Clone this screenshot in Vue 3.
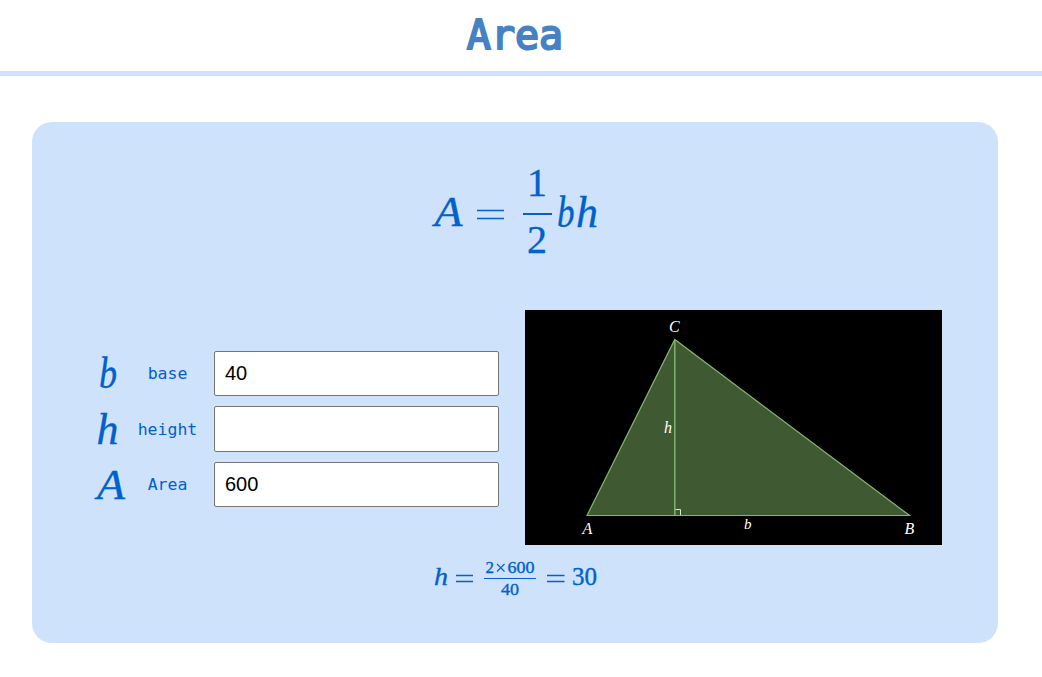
<script setup>
import { reactive } from 'vue'

const fields = reactive([
  { symbol: 'b', name: 'base', value: '40', x: 5, y: 36.5, width: 18, size: 43.5 },
  { symbol: 'h', name: 'height', value: '', x: 2.5, y: 36.5, width: 22, size: 43.5 },
  { symbol: 'A', name: 'Area', value: '600', x: 3, y: 36.5, width: 28, size: 43 },
])
</script>

<template>
  <div class="page">
    <header class="header">
      <h1 class="title">Area</h1>
    </header>
    <main class="card">
      <svg class="formula" width="170" height="96" viewBox="0 0 170 96" aria-label="A = 1/2 b h">
        <text class="italic" x="4.500" y="65.500" font-size="43" textLength="28" lengthAdjust="spacingAndGlyphs">A</text>
        <path d="M47 50.500H74M47 58.500H74" stroke-width="1.5" />
        <text x="97" y="36" font-size="40">1</text>
        <path d="M93 54H122" stroke-width="2" />
        <text x="97" y="93" font-size="40">2</text>
        <text class="italic" x="127" y="66.500" font-size="43.5" textLength="17.500" lengthAdjust="spacingAndGlyphs">b</text>
        <text class="italic" x="146" y="66.500" font-size="43.5" textLength="22" lengthAdjust="spacingAndGlyphs">h</text>
      </svg>

      <div class="content">
        <form class="fields" @submit.prevent>
          <label v-for="field in fields" :key="field.symbol" class="field">
            <svg class="symbol" width="36" height="45" viewBox="0 0 36 45">
              <text
                class="italic"
                :x="field.x"
                :y="field.y"
                :font-size="field.size"
                :textLength="field.width"
                lengthAdjust="spacingAndGlyphs"
              >{{ field.symbol }}</text>
            </svg>
            <span class="name">{{ field.name }}</span>
            <input v-model="field.value" class="input" type="text" />
          </label>
        </form>

        <svg class="diagram" width="417" height="235" viewBox="0 0 417 235">
          <path class="triangle" d="M62 205.500L149.800 29.500L384.500 205.500Z" />
          <path class="altitude" d="M149.800 30V205.500" />
          <path class="corner" d="M150.500 199.500H155.500V205" />
          <text x="144" y="22" font-size="16">C</text>
          <text x="139" y="123" font-size="16">h</text>
          <text x="57.500" y="224" font-size="16">A</text>
          <text x="219" y="219" font-size="15">b</text>
          <text x="379.500" y="223.500" font-size="16">B</text>
        </svg>
      </div>

      <svg class="result" width="170" height="44" viewBox="0 0 170 44" aria-label="h = (2 × 600) / 40 = 30">
        <text class="italic" x="4" y="30" font-size="26" textLength="14" lengthAdjust="spacingAndGlyphs">h</text>
        <path d="M26 20.500H43M26 26.500H43" stroke-width="1.300" />
        <text x="55.500" y="18" font-size="17">2</text>
        <path d="M67 9L74.500 16.500M74.500 9L67 16.500" stroke-width="1.100" />
        <text x="77.500" y="18" font-size="17" textLength="27" lengthAdjust="spacingAndGlyphs">600</text>
        <path d="M54 23.500H106" stroke-width="1.200" />
        <text x="71" y="40" font-size="17" textLength="18" lengthAdjust="spacingAndGlyphs">40</text>
        <path d="M117 20.500H134.500M117 26.500H134.500" stroke-width="1.300" />
        <text x="142" y="30" font-size="25">30</text>
      </svg>
    </main>
  </div>
</template>

<style>
body {
  background: #fff;
}
</style>

<style scoped>
.page {
  width: 1042px;
  height: 677px;
  overflow: hidden;
  color: #0060cc;
  font-family: "DejaVu Sans Mono", monospace;
}

.header {
  box-sizing: border-box;
  height: 76px;
  padding-right: 12px;
  border-bottom: 5px solid #cfe2fc;
  text-align: center;
}

.title {
  margin: 0;
  color: #4682c3;
  font-size: 40px;
  font-weight: 400;
  line-height: 68px;
  transform: scaleY(1.04);
  -webkit-text-stroke: 2px #4682c3;
}

.card {
  box-sizing: border-box;
  display: flex;
  flex-direction: column;
  align-items: center;
  width: 966px;
  height: 521px;
  margin: 46px 0 0 32px;
  padding-top: 38px;
  border-radius: 20px;
  background: #cfe2fc;
}

.formula,
.result,
.symbol,
.diagram {
  display: block;
  flex: none;
  overflow: visible;
  font-family: "Liberation Serif", serif;
}

.formula text,
.result text,
.symbol text {
  fill: #0060cc;
  stroke: #0060cc;
  stroke-width: 0.35px;
}

.formula path,
.result path {
  fill: none;
  stroke: #0060cc;
}

.italic {
  font-style: italic;
}

.content {
  display: flex;
  align-items: center;
  gap: 26px;
  margin-top: 54px;
  padding-left: 5px;
}

.fields {
  display: grid;
  gap: 10px;
  margin-top: 3px;
}

.field {
  display: grid;
  grid-template-columns: 36px 74px 285px;
  align-items: center;
  column-gap: 5px;
}

.name {
  margin-right: 8px;
  font-size: 16.5px;
  text-align: center;
}

.input {
  box-sizing: border-box;
  width: 285px;
  height: 45.5px;
  margin: 0;
  padding: 0 10.5px;
  border: 1px solid #767676;
  border-radius: 2px;
  background: #fff;
  color: #000;
  font-family: "Liberation Sans", Arial, sans-serif;
  font-size: 20px;
}

.diagram {
  background: #000;
}

.diagram text {
  fill: #fff;
  font-style: italic;
}

.triangle {
  fill: #3f5a32;
  stroke: #83b96a;
  stroke-width: 1.2;
}

.altitude {
  stroke: #83b96a;
  stroke-width: 1.4;
}

.corner {
  fill: none;
  stroke: #dce8d6;
  stroke-width: 1;
}

.result {
  margin-top: 10px;
}
</style>
